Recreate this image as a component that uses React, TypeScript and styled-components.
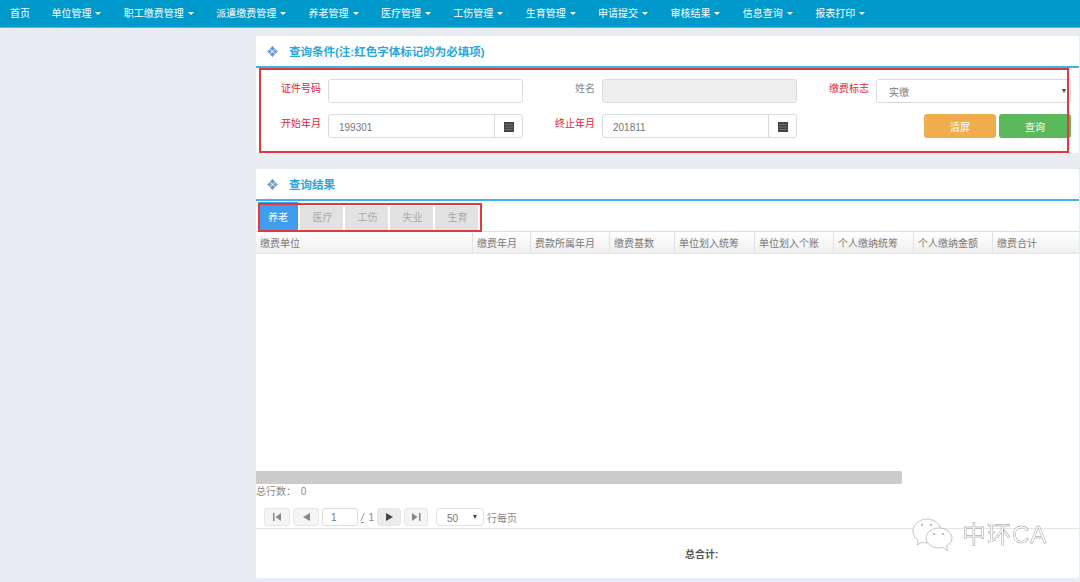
import styled, { createGlobalStyle } from "styled-components";

const GlobalStyle = createGlobalStyle`
  html, body {
    margin: 0;
    padding: 0;
    height: 582px;
    overflow: hidden;
    background: #e9edf2;
    font-family: "Liberation Sans", "Noto Sans CJK SC", sans-serif;
    font-size: 10px;
    color: #666;
  }
  * { box-sizing: border-box; }
`;

const NavBar = styled.nav`
  display: flex;
  height: 28px;
  background: #0099cc;
  border-bottom: 1px solid #4db8de;
`;

const NavItem = styled.div`
  display: flex;
  align-items: center;
  gap: 4px;
  padding: 0 11.2px 2px;
  color: #fff;
  font-size: 10px;
  &:first-child { padding: 0 10.3px 2px 10px; }
`;

const Caret = styled.span`
  width: 0;
  height: 0;
  margin-top: 1px;
  border-left: 3px solid transparent;
  border-right: 3px solid transparent;
  border-top: 3px solid #fff;
`;

const Layout = styled.div`
  display: grid;
  grid-template-columns: 256px 823px;
  padding-top: 8px;
`;

const Column = styled.main`
  grid-column: 2;
  display: flex;
  flex-direction: column;
  gap: 16px;
`;

const Card = styled.section`
  position: relative;
  background: #fff;
  border-radius: 2px;
`;

const CardHead = styled.div`
  display: flex;
  align-items: center;
  gap: 11px;
  height: 32px;
  padding-left: 11px;
  border-bottom: 2px solid #3db4e8;
  color: #2ba6de;
  font-size: 11.5px;
  font-weight: 700;
`;

const RedBox = styled.div<{ $l: number; $t: number; $w: number; $h: number }>`
  position: absolute;
  left: ${(p) => p.$l}px;
  top: ${(p) => p.$t}px;
  width: ${(p) => p.$w}px;
  height: ${(p) => p.$h}px;
  border: 2px solid #e2383f;
  pointer-events: none;
`;

const Form = styled.div`
  display: grid;
  grid-template-columns: 267px 274px 274px;
  row-gap: 11px;
  padding: 11px 0 15px;
`;

const Field = styled.div`
  display: flex;
  justify-content: flex-end;
  gap: 7px;
`;

const Label = styled.label<{ $required?: boolean }>`
  padding-top: 3px;
  font-size: 10px;
  line-height: 14px;
  color: ${(p) => (p.$required ? "#e2233a" : "#888")};
`;

const Input = styled.div<{ $disabled?: boolean }>`
  display: flex;
  align-items: center;
  width: 195px;
  height: 24px;
  padding-left: 12px;
  border: 1px solid #d8dbdf;
  border-radius: 3px;
  background: ${(p) => (p.$disabled ? "#eeeeee" : "#fff")};
  color: #777;
  font-size: 10px;
`;

const DateInput = styled(Input)`
  justify-content: space-between;
  padding-left: 10px;
`;

const DateValue = styled.span`
  padding-top: 2px;
`;

const CalendarAddon = styled.span`
  display: flex;
  align-items: center;
  justify-content: center;
  width: 28px;
  height: 100%;
  border-left: 1px solid #d8dbdf;
`;

const SelectArrow = styled.span`
  margin-left: auto;
  margin-right: 4px;
  width: 0;
  height: 0;
  border-left: 2px solid transparent;
  border-right: 2px solid transparent;
  border-top: 4px solid #444;
`;

const ButtonRow = styled.div`
  display: flex;
  justify-content: flex-end;
  gap: 3px;
`;

const ActionButton = styled.button<{ $color: string }>`
  width: 72px;
  height: 24px;
  padding: 0;
  border: none;
  border-radius: 3px;
  background: ${(p) => p.$color};
  color: #fff;
  font: inherit;
  font-size: 10px;
`;

const TabRow = styled.div`
  display: flex;
  gap: 2px;
  height: 30px;
  padding: 1px 0 1px 2px;
`;

const TabItem = styled.div<{ $active?: boolean }>`
  display: flex;
  align-items: center;
  justify-content: center;
  width: ${(p) => (p.$active ? 40 : 43)}px;
  margin-top: ${(p) => (p.$active ? 0 : 4)}px;
  padding: ${(p) => (p.$active ? "0" : "0 0 3px 2px")};
  background: ${(p) => (p.$active ? "#3f9df0" : "#e2e2e2")};
  color: ${(p) => (p.$active ? "#fff" : "#aaa")};
  font-size: 10px;
`;

const TableHead = styled.div`
  display: grid;
  grid-template-columns: 217px 58px 79px 65px 80px 79px 80px 79px 86px;
  height: 23px;
  background: linear-gradient(#ffffff, #efefef);
  border-top: 1px solid #dedede;
  border-bottom: 1px solid #e8e8e8;
`;

const HeadCell = styled.div`
  display: flex;
  align-items: center;
  padding: 0 0 1px 4px;
  border-right: 1px solid #e2e2e2;
  color: #777;
  font-size: 10px;
  &:last-child { border-right: none; }
`;

const TableBody = styled.div`
  height: 217px;
`;

const ScrollBar = styled.div`
  width: 646px;
  height: 13px;
  background: #cbcbcb;
  border-radius: 0 2px 2px 0;
`;

const TotalRow = styled.div`
  height: 15px;
  line-height: 16px;
  color: #888;
  font-size: 10px;
`;

const TotalValue = styled.span`
  margin-left: 2px;
`;

const Pager = styled.div`
  display: flex;
  align-items: center;
  gap: 3px;
  height: 30px;
  padding: 9px 0 2px 8px;
  border-bottom: 1px solid #e4e4e4;
`;

const PagerButton = styled.div<{ $hot?: boolean; $narrow?: boolean }>`
  display: flex;
  align-items: center;
  justify-content: center;
  width: ${(p) => (p.$narrow ? 24 : 26)}px;
  height: 18px;
  border: 1px solid #e6e6e6;
  border-radius: 3px;
  background: ${(p) => (p.$hot ? "#ececec" : "#f5f5f5")};
`;

const PageInput = styled.div`
  display: flex;
  align-items: center;
  width: 36px;
  height: 18px;
  padding-left: 8px;
  border: 1px solid #dcdcdc;
  border-radius: 3px;
  color: #777;
`;

const PageCount = styled.span`
  color: #888;
  font-size: 10px;
`;

const PageTotal = styled(PageCount)`
  display: flex;
  justify-content: space-between;
  width: 13px;
`;

const PageSlash = styled.em`
  text-decoration: underline;
`;

const PageSize = styled.div`
  display: flex;
  align-items: center;
  justify-content: space-between;
  width: 48px;
  height: 18px;
  margin-left: 5px;
  padding: 2px 6px 0 10px;
  border: 1px solid #e4e4e4;
  border-radius: 3px;
  color: #777;
`;

const SmallArrow = styled.span`
  width: 0;
  height: 0;
  margin-bottom: 3px;
  border-left: 2px solid transparent;
  border-right: 2px solid transparent;
  border-top: 4px solid #444;
`;

const Footer = styled.div`
  display: flex;
  align-items: center;
  height: 49px;
  padding-left: 429px;
  color: #555;
  font-size: 10px;
  font-weight: 700;
`;

const Watermark = styled.div`
  position: absolute;
  left: 656px;
  bottom: 26px;
  display: flex;
  align-items: center;
  gap: 9px;
  filter: grayscale(1);
`;

const WatermarkText = styled.span`
  color: #fff;
  font-size: 24px;
  line-height: 30px;
  letter-spacing: 1px;
  -webkit-text-stroke: 0.4px #888;
`;

const navItems = [
  "单位管理", "职工缴费管理", "派遣缴费管理", "养老管理", "医疗管理", "工伤管理",
  "生育管理", "申请提交", "审核结果", "信息查询", "报表打印",
];

const heads = [
  "缴费单位", "缴费年月", "费款所属年月", "缴费基数", "单位划入统筹",
  "单位划入个账", "个人缴纳统筹", "个人缴纳金额", "缴费合计",
];

const DiamondIcon = () => (
  <svg width="11" height="11" viewBox="0 0 11 11">
    <path d="M5.500 0 8 2.700 5.500 5 3 2.700Z" fill="#6f8fd6" />
    <path d="M2.700 3 5 5.500 2.700 8 0 5.500Z" fill="#6fa8dc" />
    <path d="M8.300 3 11 5.500 8.300 8 6 5.500Z" fill="#6fa8dc" />
    <path d="M5.500 6 8 8.300 5.500 11 3 8.300Z" fill="#6f8fd6" />
  </svg>
);

const CalendarIcon = () => (
  <svg width="10" height="11" viewBox="0 0 10 11">
    <path d="M0 1H10V11H0Z" fill="#444" />
    <path d="M1 3.500H9V4.100H1ZM1 5.700H9V6.300H1ZM1 7.900H9V8.500H1Z" fill="#999" />
  </svg>
);

const FirstIcon = () => (
  <svg width="9" height="8" viewBox="0 0 9 8" fill="#888">
    <path d="M0 0H1.500V8H0ZM8 0V8L2.500 4Z" />
  </svg>
);

const PrevIcon = () => (
  <svg width="7" height="8" viewBox="0 0 7 8" fill="#888">
    <path d="M7 0V8L0 4Z" />
  </svg>
);

const NextIcon = ({ hot }: { hot?: boolean }) => (
  <svg width="7" height="8" viewBox="0 0 7 8" fill={hot ? "#444" : "#888"}>
    <path d="M0 0V8L7 4Z" />
  </svg>
);

const LastIcon = () => (
  <svg width="9" height="8" viewBox="0 0 9 8" fill="#888">
    <path d="M0 0V8L5.500 4ZM7 0H8.500V8H7Z" />
  </svg>
);

const WeChatIcon = () => (
  <svg width="41" height="34" viewBox="0 0 41 34" fill="#fff" stroke="#aaa" strokeWidth="0.7">
    <path d="M15 1C7.500 1 1 6.500 1 13c0 3.800 2 7 5 9.200L5 27l5-2.800c1.600.5 3.200.7 5 .7 7.500 0 14-5.500 14-12S22.500 1 15 1Z" />
    <path d="M27 10c-6.600 0-13 4.500-13 10s6.400 10 13 10c1.400 0 2.700-.2 4-.6l4.500 3.600-1-5.200c3-1.800 5.500-4.600 5.500-7.800 0-5.500-6.400-10-13-10Z" />
    <path d="M9 7h2M18 7h2M21 16h2M30 16h2" stroke="#777" strokeWidth="1.200" fill="none" />
  </svg>
);

export default function App() {
  return (
    <>
      <GlobalStyle />
      <NavBar>
        <NavItem>首页</NavItem>
        {navItems.map((item) => (
          <NavItem key={item}>
            {item}
            <Caret />
          </NavItem>
        ))}
      </NavBar>
      <Layout>
        <Column>
          <Card>
            <CardHead>
              <DiamondIcon />
              查询条件(注:红色字体标记的为必填项)
            </CardHead>
            <Form>
              <Field>
                <Label $required>证件号码</Label>
                <Input />
              </Field>
              <Field>
                <Label>姓名</Label>
                <Input $disabled />
              </Field>
              <Field>
                <Label $required>缴费标志</Label>
                <Input>
                  实缴
                  <SelectArrow />
                </Input>
              </Field>
              <Field>
                <Label $required>开始年月</Label>
                <DateInput>
                  <DateValue>199301</DateValue>
                  <CalendarAddon>
                    <CalendarIcon />
                  </CalendarAddon>
                </DateInput>
              </Field>
              <Field>
                <Label $required>终止年月</Label>
                <DateInput>
                  <DateValue>201811</DateValue>
                  <CalendarAddon>
                    <CalendarIcon />
                  </CalendarAddon>
                </DateInput>
              </Field>
              <ButtonRow>
                <ActionButton $color="#f0ad4e">清屏</ActionButton>
                <ActionButton $color="#5cb85c">查询</ActionButton>
              </ButtonRow>
            </Form>
            <RedBox $l={3} $t={32} $w={810} $h={85} />
          </Card>
          <Card>
            <CardHead>
              <DiamondIcon />
              查询结果
            </CardHead>
            <TabRow>
              <TabItem $active>养老</TabItem>
              <TabItem>医疗</TabItem>
              <TabItem>工伤</TabItem>
              <TabItem>失业</TabItem>
              <TabItem>生育</TabItem>
            </TabRow>
            <TableHead>
              {heads.map((h) => (
                <HeadCell key={h}>{h}</HeadCell>
              ))}
            </TableHead>
            <TableBody />
            <ScrollBar />
            <TotalRow>
              总行数： <TotalValue>0</TotalValue>
            </TotalRow>
            <Pager>
              <PagerButton><FirstIcon /></PagerButton>
              <PagerButton><PrevIcon /></PagerButton>
              <PageInput>1</PageInput>
              <PageTotal>
                <PageSlash>/</PageSlash>1
              </PageTotal>
              <PagerButton $hot $narrow><NextIcon hot /></PagerButton>
              <PagerButton $narrow><LastIcon /></PagerButton>
              <PageSize>
                50
                <SmallArrow />
              </PageSize>
              <PageCount>行每页</PageCount>
            </Pager>
            <Footer>总合计:</Footer>
            <RedBox $l={2} $t={34} $w={224} $h={29} />
            <Watermark>
              <WeChatIcon />
              <WatermarkText>中环CA</WatermarkText>
            </Watermark>
          </Card>
        </Column>
      </Layout>
    </>
  );
}
